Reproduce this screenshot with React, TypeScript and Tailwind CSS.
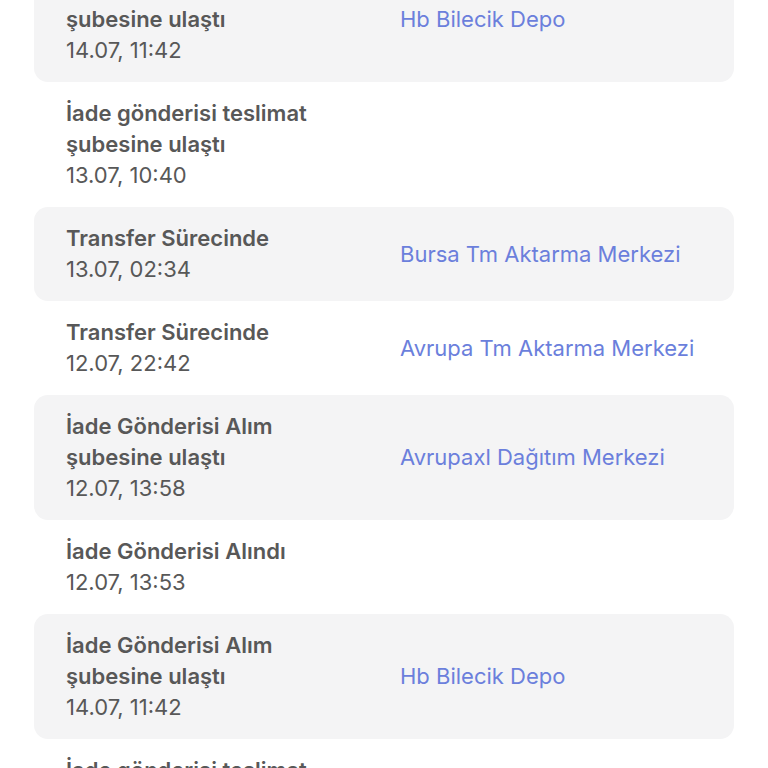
type Step = {
  title: string[];
  date: string;
  place?: string;
};

const steps: Step[] = [
  { title: ['İade Gönderisi Alım', 'şubesine ulaştı'], date: '14.07, 11:42', place: 'Hb Bilecik Depo' },
  { title: ['İade gönderisi teslimat', 'şubesine ulaştı'], date: '13.07, 10:40' },
  { title: ['Transfer Sürecinde'], date: '13.07, 02:34', place: 'Bursa Tm Aktarma Merkezi' },
  { title: ['Transfer Sürecinde'], date: '12.07, 22:42', place: 'Avrupa Tm Aktarma Merkezi' },
  { title: ['İade Gönderisi Alım', 'şubesine ulaştı'], date: '12.07, 13:58', place: 'Avrupaxl Dağıtım Merkezi' },
  { title: ['İade Gönderisi Alındı'], date: '12.07, 13:53' },
  { title: ['İade Gönderisi Alım', 'şubesine ulaştı'], date: '14.07, 11:42', place: 'Hb Bilecik Depo' },
  { title: ['İade gönderisi teslimat', 'şubesine ulaştı'], date: '13.07, 10:40' },
];

export default function App() {
  return (
    <div
      className="h-[768px] w-[768px] overflow-hidden bg-white"
      style={{ fontFamily: 'Inter, "Noto Sans", sans-serif' }}
    >
      <div className="-mt-[43px] flex flex-col px-[34px]">
        {steps.map((step, i) => (
          <div
            key={i}
            className={`flex items-center rounded-[14px] py-4 pl-8 pr-4 ${i % 2 === 0 ? 'bg-[#f4f4f5]' : 'bg-white'}`}
          >
            <div className="w-[334px] shrink-0 text-[22px] leading-[31px] text-[#585858]">
              {step.title.map((line) => (
                <div key={line} className="font-semibold">
                  {line}
                </div>
              ))}
              <div>{step.date}</div>
            </div>
            {step.place && (
              <div className="text-[22px] leading-[31px] text-[#6b7fdc]">{step.place}</div>
            )}
          </div>
        ))}
      </div>
    </div>
  );
}
